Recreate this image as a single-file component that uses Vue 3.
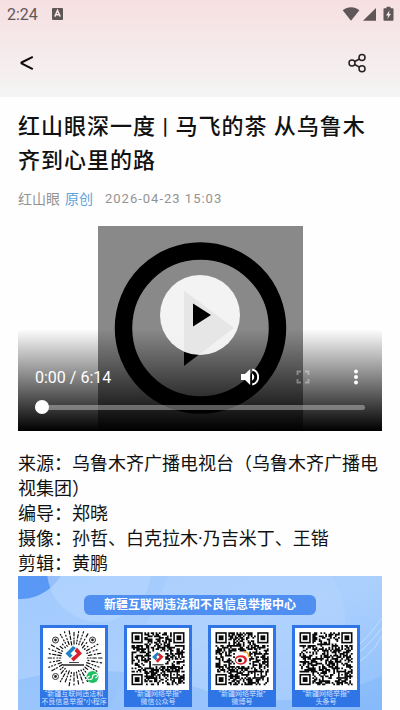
<script setup>
import { ref } from 'vue'

const position = ref(0)

const credits = [
  '来源：乌鲁木齐广播电视台（乌鲁木齐广播电视集团）',
  '编导：郑晓',
  '摄像：孙哲、白克拉木·乃吉米丁、王锴',
  '剪辑：黄鹏',
]

function random(seed) {
  let s = seed
  return () => {
    s = (s * 1103515245 + 12345) % 2147483648
    return s / 2147483648
  }
}

const SIZE = 33

// Path of the dark modules, leaving out the finder corners and the logo area
function modules(seed) {
  const next = random(seed)
  let d = ''
  for (let y = 0; y < SIZE; y++) {
    for (let x = 0; x < SIZE; x++) {
      const dark = next() < 0.52
      const corner = (x < 8 && y < 8) || (x > SIZE - 9 && y < 8) || (x < 8 && y > SIZE - 9)
      const logo = Math.abs(x - 16) < 5 && Math.abs(y - 16) < 5 && seed !== 97
      const align = x > 23 && x < 29 && y > 23 && y < 29
      if (dark && !corner && !logo && !align) d += `M${x} ${y}h1.1v1.1h-1.1z`
    }
  }
  return d
}

// Dashes of the round mini-program code
function rays() {
  const next = random(41)
  const eyes = [[12.5, 12], [49.5, 12], [12.5, 48.5], [49.5, 49]]
  let d = ''
  for (let i = 0; i < 36; i++) {
    const a = (i / 36) * Math.PI * 2
    let r = 13 + next() * 2
    while (r < 27) {
      const end = Math.min(r + (next() < 0.4 ? 3.4 : 1), 28)
      const p = (q) => [31 + Math.cos(a) * q, 30 + Math.sin(a) * q]
      const [x1, y1] = p(r)
      const [x2, y2] = p(end)
      const free = eyes.every(([ex, ey]) => Math.hypot(x2 - ex, y2 - ey) > 5 && Math.hypot(x1 - ex, y1 - ey) > 5)
      if (free) d += `M${x1.toFixed(2)} ${y1.toFixed(2)}L${x2.toFixed(2)} ${y2.toFixed(2)}`
      r = end + 1.6 + next() * 1.2
    }
  }
  return d
}

const rayPath = rays()
const cards = [
  { kind: 'round', lines: ['“新疆互联网违法和', '不良信息举报”小程序'] },
  { kind: 'office', path: modules(17), lines: ['“新疆网络举报”', '微信公众号'] },
  { kind: 'weibo', path: modules(53), lines: ['“新疆网络举报”', '微博号'] },
  { kind: 'plain', path: modules(97), lines: ['“新疆网络举报”', '头条号'] },
]
const finders = [[0, 0], [SIZE - 7, 0], [0, SIZE - 7]]
</script>

<template>
  <div class="page">
    <header class="top">
      <div class="status">
        <span class="clock">2:24</span>
        <svg class="badge" viewBox="0 0 11 12" width="11" height="12">
          <rect width="11" height="12" rx="1" fill="#5f5658" />
          <path d="M2.8 8.6 5.5 2.4 8.2 8.6M3.8 6.8h3.4" fill="none" stroke="#f6e4e6" stroke-width="1.5" />
        </svg>
        <svg class="signals" viewBox="0 0 52 16" width="52" height="16" fill="#5f5658">
          <path d="M.7 4.2C5.6.3 12.6.3 17.4 4.2L9 14.8z" />
          <path d="M21 14.8 34 2v12.8z" />
          <path d="M44.5 .7h4v1.6h2.2q.8 0 .8.8V14q0 .8-.8.8H42.3q-.8 0-.8-.8V3.1q0-.8.8-.8h2.200z" />
          <path d="M47.6 4.200 44 9.400h2.100L45.4 13l3.600-5.200h-2.100z" fill="#f6e7e8" />
        </svg>
      </div>
      <nav class="nav">
        <button type="button" class="icon-button" aria-label="返回">
          <svg viewBox="0 0 20 20" width="20" height="20">
            <path d="M15.800 3.800 4.500 9.500v.9l11.300 5.800" fill="none" stroke="#0c0c0c" stroke-width="2" stroke-linejoin="round" />
          </svg>
        </button>
        <button type="button" class="icon-button" aria-label="分享">
          <svg viewBox="0 0 20 20" width="20" height="20" fill="none" stroke="#242122" stroke-width="1.500">
            <circle cx="5" cy="10" r="3" />
            <circle cx="15" cy="4.500" r="3" />
            <circle cx="15" cy="15.700" r="3" />
            <path d="M7.700 8.500 12.400 6M7.700 11.500l4.700 2.700" />
          </svg>
        </button>
      </nav>
    </header>

    <main class="article">
      <h1 class="title">红山眼深一度 | 马飞的茶 从乌鲁木齐到心里的路</h1>
      <p class="meta">
        <span>红山眼</span>
        <span class="original">原创</span>
        <time datetime="2026-04-23T15:03">2026-04-23 15:03</time>
      </p>

      <section class="player">
        <svg class="poster" viewBox="0 0 205 205" width="205" height="205">
          <rect width="205" height="205" fill="#898989" />
          <circle cx="102.500" cy="102" r="77" fill="none" stroke="#000" stroke-width="17.500" />
          <path d="M86 64.500 136 102 86 140z" />
        </svg>
        <div class="controls">
          <div class="row">
            <span class="time">0:00 / 6:14</span>
            <button type="button" class="control" aria-label="静音">
              <svg viewBox="0 0 18 18" width="18" height="18" fill="#fff">
                <path d="M0 6v6h4l5.200 5V1L4 6zM11 5.200q2.300 1.500 2.300 3.800T11 12.800z" />
                <path d="M11.200 1.500a7.700 7.700 0 0 1 0 15" fill="none" stroke="#fff" stroke-width="1.900" />
              </svg>
            </button>
            <button type="button" class="control" aria-label="全屏" disabled>
              <svg viewBox="0 0 14 14" width="14" height="14" fill="none" stroke="#fff" stroke-opacity=".35" stroke-width="1.900">
                <path d="M1.500 5V1.500H5M9 1.500h3.500V5M12.500 9v3.500H9M5 12.500H1.500V9" />
              </svg>
            </button>
            <button type="button" class="control" aria-label="更多">
              <svg viewBox="0 0 4 16" width="4" height="16" fill="#fff">
                <circle cx="2" cy="2.500" r="2" />
                <circle cx="2" cy="8" r="2" />
                <circle cx="2" cy="13.500" r="2" />
              </svg>
            </button>
          </div>
          <input v-model="position" class="seek" type="range" min="0" max="374" aria-label="播放进度" />
        </div>
        <button type="button" class="play" aria-label="播放">
          <svg viewBox="0 0 20 24" width="20" height="24"><path d="M1 .5 19 12 1 23.500z" /></svg>
        </button>
      </section>

      <section class="credits">
        <p v-for="line in credits" :key="line">{{ line }}</p>
      </section>

      <section class="banner">
        <svg class="scenery" viewBox="0 0 364 134" preserveAspectRatio="none">
          <defs>
            <linearGradient id="sky" x1="0" y1="0" x2="1" y2="1">
              <stop offset="0" stop-color="#a0c9fd" />
              <stop offset=".5" stop-color="#acd0fd" />
              <stop offset="1" stop-color="#8fc0fb" />
            </linearGradient>
          </defs>
          <rect width="364" height="134" fill="url(#sky)" />
          <path d="M150 0H315Q327 22 328 50 326 100 296 134H90z" fill="#b4d4fd" opacity=".5" />
          <circle cx="2" cy="-24" r="47" fill="#5998f5" />
          <circle cx="81" cy="-6" r="52" fill="#b6d6ff" opacity=".65" />
          <path d="M0 104Q90 82 180 112T364 100V134H0z" fill="#78b0fa" opacity=".35" />
          <path d="M320 86Q346 68 364 42M320 92Q348 74 364 52M320 98Q352 84 364 60" fill="none" stroke="#d6e8ff" stroke-width="1" opacity=".65" />
        </svg>
        <h2 class="banner-title">新疆互联网违法和不良信息举报中心</h2>
        <ul class="cards">
          <li v-for="card in cards" :key="card.kind" class="card">
            <svg v-if="card.kind === 'round'" class="code" viewBox="0 0 62 62">
              <path :d="rayPath" fill="none" stroke="#111" stroke-width="1.200" stroke-linecap="round" />
              <g fill="#fff" stroke="#333" stroke-width="1">
                <circle cx="12.500" cy="12" r="3" />
                <circle cx="49.500" cy="12" r="3" />
                <circle cx="12.500" cy="48.500" r="3" />
              </g>
              <g fill="#222">
                <circle cx="12.500" cy="12" r="1.400" />
                <circle cx="49.500" cy="12" r="1.400" />
                <circle cx="12.500" cy="48.500" r="1.400" />
              </g>
              <circle cx="31" cy="30" r="12" fill="#fff" />
              <path d="M30 18 22.500 25.500l4.500 4.500 2.500-2.500-2-2L33 20z" fill="#1c83c4" />
              <path d="M34 19.500 39 25.500 30.500 33.500 28 30.500l6-5-2.500-2.500z" fill="#d8232c" />
              <path d="M26 34.500h10" stroke="#444" stroke-width="1" />
              <path d="M20 37h21" stroke="#222" stroke-width="1.500" />
              <circle cx="49.500" cy="49" r="6" fill="#20bf64" />
              <path d="M47.300 51.400a1.700 1.700 0 1 1-.5-3M47.300 51.400q2.200 0 2.200-2.400t2.200-2.400a1.700 1.700 0 1 1 .5 3" fill="none" stroke="#fff" stroke-width="1.100" />
            </svg>
            <svg v-else class="code" viewBox="-2.800 -2.600 38.600 38.600">
              <path :d="card.path" fill="#0a0a0a" />
              <g v-for="([x, y], i) in finders" :key="i">
                <rect :x="x + .5" :y="y + .5" width="6" height="6" fill="none" stroke="#0a0a0a" />
                <rect :x="x + 2" :y="y + 2" width="3" height="3" fill="#0a0a0a" />
              </g>
              <rect x="24.500" y="24.500" width="4" height="4" fill="none" stroke="#0a0a0a" />
              <rect x="26" y="26" width="1" height="1" fill="#0a0a0a" />
              <g v-if="card.kind === 'office'">
                <path d="M16 12.500 12.800 15.500l2.200 2 1.200-1.200-.8-.8 2-2z" fill="#1c83c4" />
                <path d="M17.200 13 20 15.300 16.300 19l-1.300-1.300 2.500-2.300-1-1z" fill="#d8232c" />
                <path d="M13 20.300h7" stroke="#333" stroke-width=".8" />
              </g>
              <g v-if="card.kind === 'weibo'">
                <ellipse cx="15.800" cy="17.300" rx="3.800" ry="3" fill="#df2029" />
                <ellipse cx="15.400" cy="17.500" rx="2.600" ry="1.900" fill="#fff" />
                <circle cx="15.200" cy="17.600" r="1.200" fill="#111" />
                <path d="M17.500 12.500q3.500-.5 3 3" fill="none" stroke="#f4a21c" stroke-width=".9" />
              </g>
            </svg>
            <p class="caption">
              <span v-for="line in card.lines" :key="line">{{ line }}</span>
            </p>
          </li>
        </ul>
      </section>
    </main>
  </div>
</template>

<style>
body {
  background: #fefefe;
}
</style>

<style scoped>
.page {
  font-family: Roboto, "Noto Sans CJK SC", sans-serif;
  color: #111;
}

h1,
h2,
p,
ul {
  margin: 0;
  padding: 0;
}

button {
  display: grid;
  place-items: center;
  padding: 0;
  border: 0;
  background: none;
  cursor: pointer;
}

svg {
  display: block;
}

.top {
  background: linear-gradient(#f6dfe1, #f4f4f4);
}

.status {
  display: flex;
  align-items: center;
  height: 28px;
  padding: 0 6px 0 7px;
}

.clock {
  font-size: 16px;
  color: #5f5658;
}

.badge {
  margin-left: 14px;
}

.signals {
  margin-left: auto;
}

.nav {
  display: flex;
  justify-content: space-between;
  align-items: center;
  height: 69px;
  padding: 0 28px 0 12px;
}

.icon-button {
  width: 30px;
  height: 30px;
}

.article {
  padding: 13px 18px 0;
}

.title {
  font-size: 22px;
  font-weight: 500;
  line-height: 34px;
  letter-spacing: 1px;
}

.meta {
  display: flex;
  align-items: center;
  height: 20px;
  margin-top: 10px;
  font-size: 14px;
  color: #939393;
}

.original {
  margin-left: 5px;
  color: #5da3dd;
}

.meta time {
  margin-left: 12px;
  font-size: 13px;
  letter-spacing: 1px;
}

.player {
  display: grid;
  height: 205px;
  margin-top: 18px;
}

.player > * {
  grid-area: 1 / 1;
}

.poster {
  justify-self: center;
}

.controls {
  display: flex;
  flex-direction: column;
  justify-content: flex-end;
  align-self: end;
  gap: 11px;
  box-sizing: border-box;
  height: 102px;
  padding-bottom: 17px;
  background: linear-gradient(transparent, #000);
}

.row {
  display: flex;
  align-items: center;
  height: 24px;
  padding-left: 17px;
}

.time {
  margin-right: auto;
  font-size: 16px;
  color: #fff;
}

.control {
  width: 53px;
  height: 24px;
}

.seek {
  appearance: none;
  height: 14px;
  margin: 0 17px;
  background: none;
}

.seek::-webkit-slider-runnable-track {
  height: 5px;
  border-radius: 3px;
  background: rgba(255, 255, 255, 0.35);
}

.seek::-webkit-slider-thumb {
  appearance: none;
  width: 14px;
  height: 14px;
  margin-top: -5px;
  border-radius: 50%;
  background: #fff;
}

.play {
  place-self: center;
  width: 80px;
  height: 80px;
  margin-bottom: 28px;
  padding-left: 4px;
  border-radius: 50%;
  background: rgba(255, 255, 255, 0.9);
}

.credits {
  margin-top: 20px;
  font-size: 18px;
  line-height: 25px;
}

.banner {
  position: relative;
  padding: 19px 22px 3px;
}

.scenery {
  position: absolute;
  inset: 0;
  width: 100%;
  height: 100%;
}

.banner-title {
  position: relative;
  width: fit-content;
  margin: 0 auto;
  padding: 0 20px;
  border-radius: 6px;
  background: #508ff2;
  color: #fff;
  font-size: 12px;
  font-weight: 700;
  line-height: 20px;
}

.cards {
  position: relative;
  display: grid;
  grid-template-columns: repeat(4, minmax(0, 1fr));
  gap: 16px;
  margin-top: 10px;
  list-style: none;
}

.card {
  padding: 3px 3px 1px;
  background: #2f75e5;
}

.code {
  width: 100%;
  background: #fff;
}

.caption {
  display: flex;
  flex-direction: column;
  align-items: center;
  margin: 0 -3px;
  font-size: 7px;
  line-height: 8px;
  color: #cfe2ff;
  white-space: nowrap;
}
</style>
